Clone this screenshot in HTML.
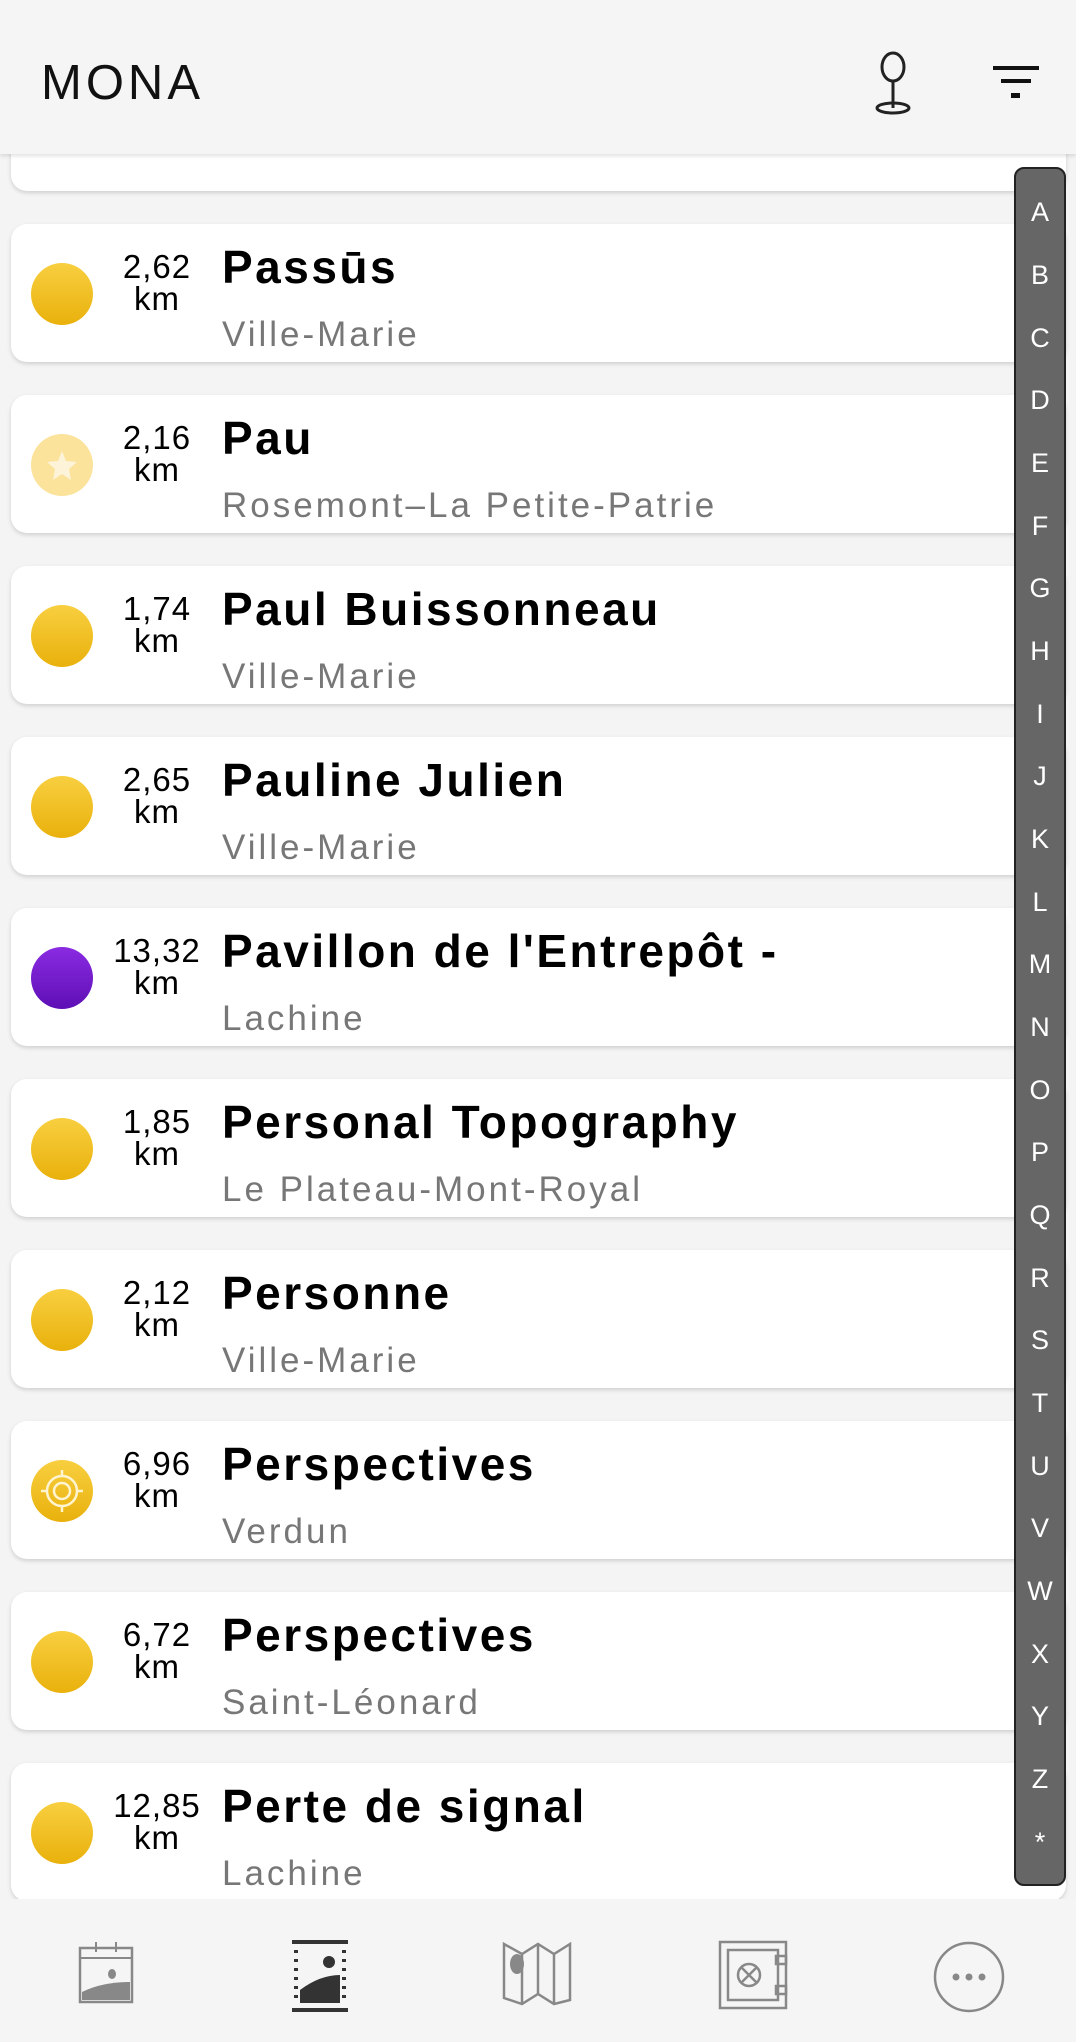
<!DOCTYPE html>
<html><head><meta charset="utf-8"><style>
*{margin:0;padding:0;box-sizing:border-box}
body{width:1076px;height:2042px;background:#f4f4f4;font-family:"Liberation Sans",sans-serif;position:relative;overflow:hidden}
.hdr{position:absolute;left:0;top:0;width:1076px;height:154px;background:#f5f5f5;box-shadow:0 2px 4px rgba(0,0,0,.12);z-index:5}
.hdr .t{position:absolute;left:41px;top:55px;font-size:49px;letter-spacing:4px;color:#111}
.card{position:absolute;left:11px;width:1055px;height:138px;background:#fff;border-radius:16px;box-shadow:0 2px 4px rgba(0,0,0,.15)}
.dot{position:absolute;left:20px;top:39px;width:62px;height:62px;border-radius:50%;background:linear-gradient(#f8cf40,#e9b10c)}
.d{position:absolute;left:84px;width:124px;text-align:center;font-size:33px;line-height:33px;color:#000;letter-spacing:1px}
.d1{top:26px}.d2{top:58px}
.tt{position:absolute;left:211px;top:16px;font-size:46px;font-weight:bold;color:#000;white-space:nowrap;letter-spacing:2.5px}
.st{position:absolute;left:211px;top:91px;font-size:35px;color:#777;white-space:nowrap;letter-spacing:3px}
.idx{position:absolute;left:1014px;top:167px;width:52px;height:1719px;background:#666;border:2px solid #222;border-radius:10px;z-index:6}
.idx div{position:absolute;left:0;width:48px;text-align:center;color:#fff;font-size:27px;line-height:30px;margin-top:-165px}
.nav{position:absolute;left:0;top:1899px;width:1076px;height:143px;background:#f5f5f5;z-index:7}
.nav svg{position:absolute;top:41px}
</style></head><body>
<div class="hdr"><div class="t">MONA</div>
<svg style="position:absolute;left:868px;top:50px" width="50" height="66" viewBox="0 0 50 66"><ellipse cx="25" cy="17" rx="11" ry="14" fill="none" stroke="#222" stroke-width="3"/><line x1="25" y1="31" x2="25" y2="58" stroke="#222" stroke-width="3"/><ellipse cx="25" cy="58" rx="16" ry="5" fill="none" stroke="#222" stroke-width="3"/></svg>
<svg style="position:absolute;left:993px;top:66px" width="48" height="34" viewBox="0 0 48 34"><rect x="0" y="0" width="46" height="4" fill="#111"/><rect x="8" y="13" width="30" height="4" fill="#111"/><rect x="18" y="27" width="9" height="5" fill="#111"/></svg>
</div>
<div class="card" style="top:53px"></div>
<div class="card" style="top:224px"><div class="dot"></div><div class="d d1">2,62</div><div class="d d2">km</div><div class="tt">Passūs</div><div class="st">Ville-Marie</div></div>
<div class="card" style="top:395px"><div class="dot" style="background:#fbe39c"><svg width="62" height="62" viewBox="0 0 62 62"><polygon points="31,17 35,27 46,28 38,35 40,46 31,40 22,46 24,35 16,28 27,27" fill="#fdf3d8"/></svg></div><div class="d d1">2,16</div><div class="d d2">km</div><div class="tt">Pau</div><div class="st">Rosemont–La Petite-Patrie</div></div>
<div class="card" style="top:566px"><div class="dot"></div><div class="d d1">1,74</div><div class="d d2">km</div><div class="tt">Paul Buissonneau</div><div class="st">Ville-Marie</div></div>
<div class="card" style="top:737px"><div class="dot"></div><div class="d d1">2,65</div><div class="d d2">km</div><div class="tt">Pauline Julien</div><div class="st">Ville-Marie</div></div>
<div class="card" style="top:908px"><div class="dot" style="background:linear-gradient(#8a2be2,#5e0fb5)"></div><div class="d d1">13,32</div><div class="d d2">km</div><div class="tt">Pavillon de l'Entrepôt -</div><div class="st">Lachine</div></div>
<div class="card" style="top:1079px"><div class="dot"></div><div class="d d1">1,85</div><div class="d d2">km</div><div class="tt">Personal Topography</div><div class="st">Le Plateau-Mont-Royal</div></div>
<div class="card" style="top:1250px"><div class="dot"></div><div class="d d1">2,12</div><div class="d d2">km</div><div class="tt">Personne</div><div class="st">Ville-Marie</div></div>
<div class="card" style="top:1421px"><div class="dot"><svg width="62" height="62" viewBox="0 0 62 62" fill="none" stroke="#fff4d0" stroke-width="2.5"><circle cx="31" cy="31" r="15"/><circle cx="31" cy="31" r="8"/><path d="M31 10v7M31 45v7M10 31h7M45 31h7"/></svg></div><div class="d d1">6,96</div><div class="d d2">km</div><div class="tt">Perspectives</div><div class="st">Verdun</div></div>
<div class="card" style="top:1592px"><div class="dot"></div><div class="d d1">6,72</div><div class="d d2">km</div><div class="tt">Perspectives</div><div class="st">Saint-Léonard</div></div>
<div class="card" style="top:1763px"><div class="dot"></div><div class="d d1">12,85</div><div class="d d2">km</div><div class="tt">Perte de signal</div><div class="st">Lachine</div></div>
<div class="idx">
<div style="top:193px">A</div><div style="top:256px">B</div><div style="top:319px">C</div><div style="top:381px">D</div><div style="top:444px">E</div><div style="top:507px">F</div><div style="top:569px">G</div><div style="top:632px">H</div><div style="top:695px">I</div><div style="top:757px">J</div><div style="top:820px">K</div><div style="top:883px">L</div><div style="top:945px">M</div><div style="top:1008px">N</div><div style="top:1071px">O</div><div style="top:1133px">P</div><div style="top:1196px">Q</div><div style="top:1259px">R</div><div style="top:1321px">S</div><div style="top:1384px">T</div><div style="top:1447px">U</div><div style="top:1509px">V</div><div style="top:1572px">W</div><div style="top:1635px">X</div><div style="top:1697px">Y</div><div style="top:1760px">Z</div><div style="top:1823px">*</div>
</div>
<div class="nav">
<svg style="left:78px" width="56" height="64" viewBox="0 0 56 64"><rect x="2" y="8" width="52" height="54" fill="none" stroke="#888" stroke-width="2.5"/><line x1="2" y1="18" x2="54" y2="18" stroke="#888" stroke-width="2"/><path d="M18 2v10M38 2v10" stroke="#888" stroke-width="2"/><ellipse cx="34" cy="34" rx="4" ry="5" fill="#888"/><path d="M4 52q20-10 48-10v18H4z" fill="#888"/></svg>
<svg style="left:292px" width="56" height="72" viewBox="0 0 56 72"><path d="M0 2h56M0 70h56" stroke="#333" stroke-width="4"/><path d="M4 10v54M52 10v54" stroke="#333" stroke-width="4" stroke-dasharray="3 6"/><circle cx="37" cy="22" r="6" fill="#333"/><path d="M8 63V50q20-15 40-15v28z" fill="#333"/></svg>
<svg style="left:502px" width="70" height="66" viewBox="0 0 70 66" fill="none" stroke="#888" stroke-width="2.5"><path d="M2 4l18 10 16-10 16 10 16-10v56l-16 4-16-10-16 10-18-6z M20 14v50M36 4v50M52 14v50"/><ellipse cx="15" cy="24" rx="7" ry="10" fill="#888" stroke="none"/></svg>
<svg style="left:718px" width="72" height="70" viewBox="0 0 72 70" fill="none" stroke="#888" stroke-width="2.5"><rect x="2" y="2" width="66" height="66"/><rect x="10" y="10" width="50" height="50"/><circle cx="31" cy="35" r="11"/><path d="M24 28l14 14M38 28l-14 14"/><rect x="58" y="16" width="10" height="8"/><rect x="58" y="46" width="10" height="8"/></svg>
<svg style="left:932px" width="74" height="74" viewBox="0 0 74 74"><circle cx="37" cy="37" r="34" fill="none" stroke="#888" stroke-width="2.5"/><circle cx="24" cy="37" r="3.5" fill="#888"/><circle cx="37" cy="37" r="3.5" fill="#888"/><circle cx="50" cy="37" r="3.5" fill="#888"/></svg>
</div>
</body></html>
